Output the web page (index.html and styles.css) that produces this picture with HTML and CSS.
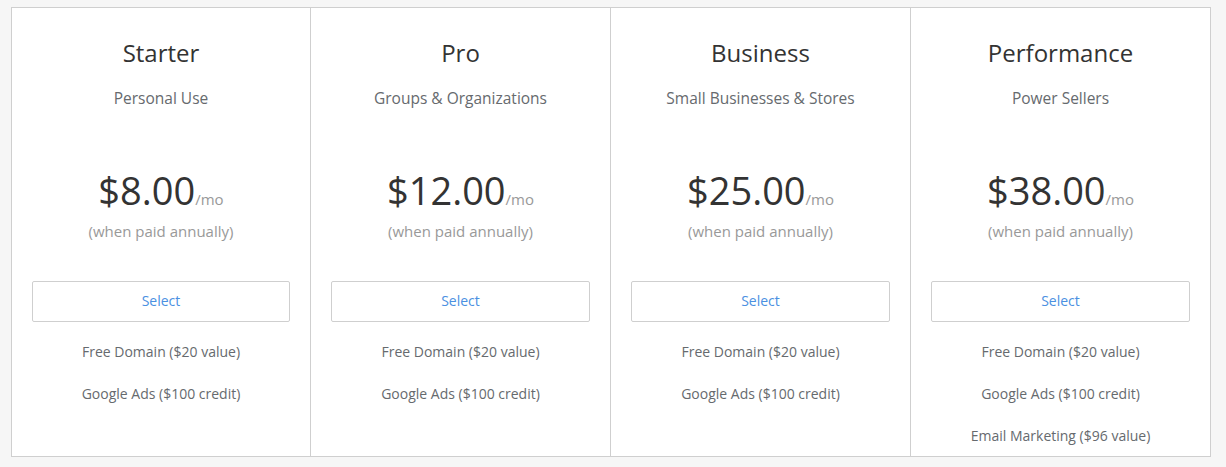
FILE: index.html
```html
<!DOCTYPE html>
<html>
<head>
<meta charset="utf-8">
<link rel="stylesheet" href="styles.css">
</head>
<body>
<div class="page">
  <div class="plans">
    <div class="plan">
      <h3 class="plan-name">Starter</h3>
      <p class="plan-sub">Personal Use</p>
      <div class="price"><span class="amount">$8.00</span><span class="per">/mo</span></div>
      <p class="note">(when paid annually)</p>
      <button class="select">Select</button>
      <ul class="features">
        <li>Free Domain ($20 value)</li>
        <li>Google Ads ($100 credit)</li>
      </ul>
    </div>
    <div class="plan">
      <h3 class="plan-name">Pro</h3>
      <p class="plan-sub">Groups &amp; Organizations</p>
      <div class="price"><span class="amount">$12.00</span><span class="per">/mo</span></div>
      <p class="note">(when paid annually)</p>
      <button class="select">Select</button>
      <ul class="features">
        <li>Free Domain ($20 value)</li>
        <li>Google Ads ($100 credit)</li>
      </ul>
    </div>
    <div class="plan">
      <h3 class="plan-name">Business</h3>
      <p class="plan-sub">Small Businesses &amp; Stores</p>
      <div class="price"><span class="amount">$25.00</span><span class="per">/mo</span></div>
      <p class="note">(when paid annually)</p>
      <button class="select">Select</button>
      <ul class="features">
        <li>Free Domain ($20 value)</li>
        <li>Google Ads ($100 credit)</li>
      </ul>
    </div>
    <div class="plan">
      <h3 class="plan-name">Performance</h3>
      <p class="plan-sub">Power Sellers</p>
      <div class="price"><span class="amount">$38.00</span><span class="per">/mo</span></div>
      <p class="note">(when paid annually)</p>
      <button class="select">Select</button>
      <ul class="features">
        <li>Free Domain ($20 value)</li>
        <li>Google Ads ($100 credit)</li>
        <li>Email Marketing ($96 value)</li>
      </ul>
    </div>
  </div>
</div>
</body>
</html>
```

FILE: styles.css
```css
* { box-sizing: border-box; }
html, body {
  margin: 0;
  padding: 0;
  background: #f6f6f6;
  font-family: "Open Sans", Lato, Arial, sans-serif;
}
.page {
  padding: 7px 0 0 11px;
}
.plans {
  width: 1200px;
  display: grid;
  grid-template-columns: 298px 300px 300px 300px;
  background: #fff;
  border: 1px solid #cfcfcf;
}
.plan {
  padding: 30px 20px 10px;
  text-align: center;
}
.plan + .plan {
  border-left: 1px solid #cfcfcf;
}
.plan-name {
  margin: 0;
  font-size: 24px;
  line-height: 30px;
  font-weight: 400;
  color: #333;
}
.plan-sub {
  margin: 20px 0 0;
  font-size: 15.5px;
  line-height: 20px;
  color: #666a6e;
}
.price {
  margin-top: 60px;
  height: 44px;
  line-height: 44px;
  color: #333;
}
.amount {
  font-size: 38px;
}
.per {
  font-size: 15px;
  color: #999;
}
.note {
  margin: 9px 0 0;
  font-size: 15px;
  line-height: 20px;
  color: #999;
}
.select {
  display: block;
  width: 100%;
  height: 41px;
  margin-top: 40px;
  padding: 0 0 2px;
  background: #fff;
  border: 1px solid #cfcfcf;
  border-radius: 2px;
  font-family: inherit;
  font-size: 14px;
  color: #4a90e2;
}
.features {
  list-style: none;
  margin: 20px 0 0;
  padding: 0;
  display: flex;
  flex-direction: column;
  gap: 22px;
}
.features li {
  font-size: 14px;
  line-height: 20px;
  color: #666a6e;
}
```
